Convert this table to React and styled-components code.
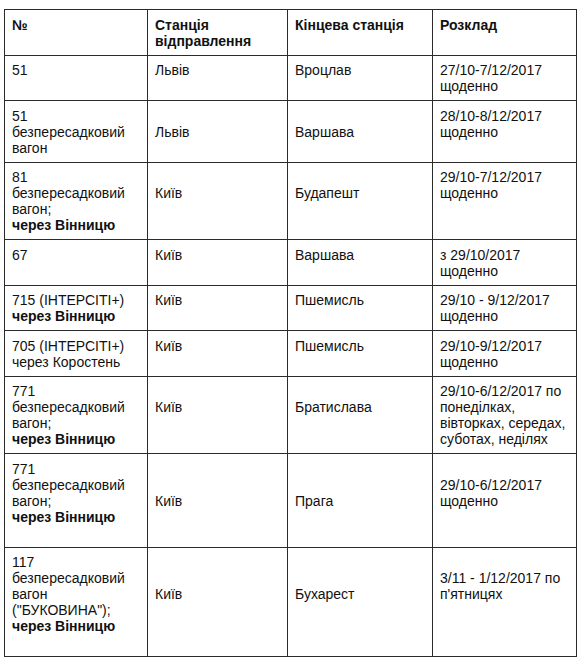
import React from 'react'
import styled, { createGlobalStyle } from 'styled-components'

const GlobalStyle = createGlobalStyle`
    html, body {
        margin: 0;
        padding: 0;
        background: #ffffff;
    }
`;

const Page = styled.div`
    padding: 9px 4px 0 4px;
    font-family: "Liberation Sans", Arial, sans-serif;
    color: #111111;
`;

const Table = styled.table`
    width: 572px;
    border-collapse: collapse;
    table-layout: fixed;
`;

const HeadCell = styled.th`
    border: 1px solid #2b2b2b;
    padding: 6.5px 7px 6px 7px;
    vertical-align: top;
    text-align: left;
    font-size: 14px;
    line-height: 16px;
    font-weight: bold;
`;

const Cell = styled.td`
    border: 1px solid #2b2b2b;
    padding: 6.5px 7px 6px 7px;
    vertical-align: top;
    font-size: 14px;
    line-height: 16px;
    font-weight: normal;
`;

const Line = styled.div`
    white-space: nowrap;
    font-weight: ${props => props.$bold ? 'bold' : 'inherit'};
    min-height: 16px;
`;

const columns = [
    { title: ['№'], width: 143 },
    { title: ['Станція', 'відправлення'], width: 140 },
    { title: ['Кінцева станція'], width: 145 },
    { title: ['Розклад'], width: 144 },
]

const B = text => ({ text, bold: true })

const rows = [
    [['51'], ['Львів'], ['Вроцлав'], ['27/10-7/12/2017', 'щоденно']],
    [['51', 'безпересадковий', 'вагон'], ['', 'Львів'], ['', 'Варшава'], ['28/10-8/12/2017', 'щоденно']],
    [['81', 'безпересадковий', 'вагон;', B('через Вінницю')], ['', 'Київ'], ['', 'Будапешт'], ['29/10-7/12/2017', 'щоденно']],
    [['67'], ['Київ'], ['Варшава'], ['з 29/10/2017', 'щоденно']],
    [['715 (ІНТЕРСІТІ+)', B('через Вінницю')], ['Київ'], ['Пшемисль'], ['29/10 - 9/12/2017', 'щоденно']],
    [['705 (ІНТЕРСІТІ+)', 'через Коростень'], ['Київ'], ['Пшемисль'], ['29/10-9/12/2017', 'щоденно']],
    [['771', 'безпересадковий', 'вагон;', B('через Вінницю')], ['', 'Київ'], ['', 'Братислава'], ['29/10-6/12/2017 по', 'понеділках,', 'вівторках, середах,', 'суботах, неділях']],
    [['771', 'безпересадковий', 'вагон;', B('через Вінницю'), ''], ['', '', 'Київ'], ['', '', 'Прага'], ['', '29/10-6/12/2017', 'щоденно']],
    [['117', 'безпересадковий', 'вагон', '("БУКОВИНА");', B('через Вінницю'), ''], ['', '', 'Київ'], ['', '', 'Бухарест'], ['', '3/11 - 1/12/2017 по', "п'ятницях"]],
]

const renderLines = lines => lines.map((line, index) => {
    const item = typeof line === 'string' ? { text: line, bold: false } : line
    return (
        <Line key={index} $bold={item.bold}>{item.text || '\u00a0'}</Line>
    )
})

export default function App() {
    return (
        <Page>
            <GlobalStyle />
            <Table>
                <colgroup>
                    {columns.map((col, index) => <col key={index} style={{ width: col.width }} />)}
                </colgroup>
                <thead>
                    <tr>
                        {columns.map((col, index) => (
                            <HeadCell key={index}>{renderLines(col.title)}</HeadCell>
                        ))}
                    </tr>
                </thead>
                <tbody>
                    {rows.map((row, rowIndex) => (
                        <tr key={rowIndex}>
                            {row.map((cell, cellIndex) => (
                                <Cell key={cellIndex}>{renderLines(cell)}</Cell>
                            ))}
                        </tr>
                    ))}
                </tbody>
            </Table>
        </Page>
    )
}
